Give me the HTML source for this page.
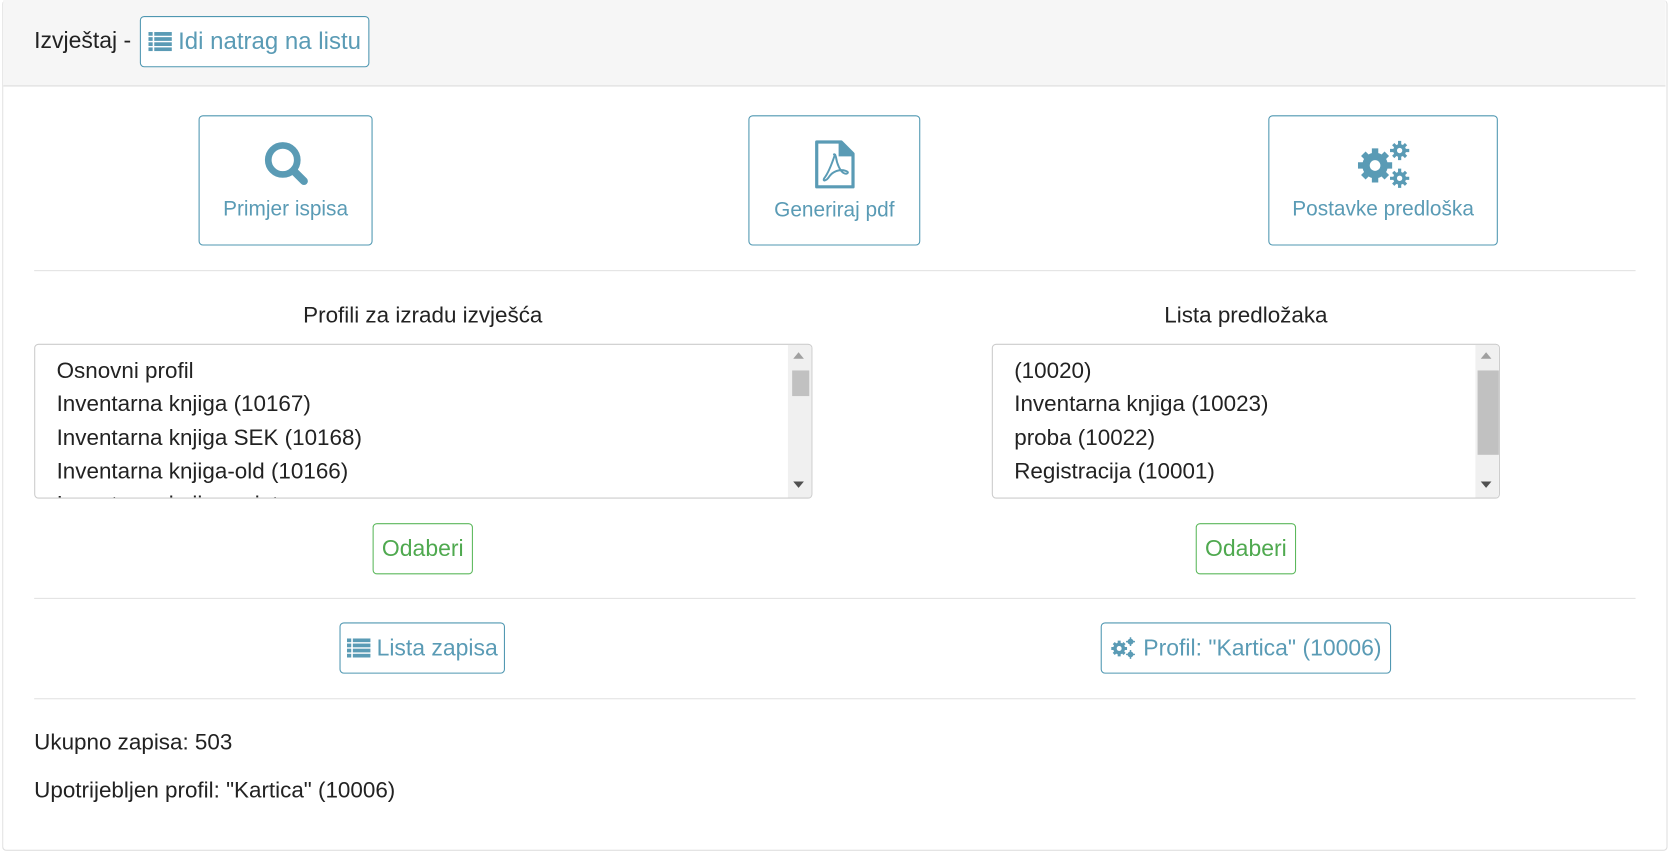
<!DOCTYPE html>
<html><head><meta charset="utf-8"><style>
html,body{margin:0;padding:0;background:#fff;overflow:hidden;width:1674px;height:862px}
#w{position:absolute;left:0;top:0;width:1563px;height:805px;transform:scale(1.0676);transform-origin:0 0;font-family:"Liberation Sans",sans-serif;color:#222}
.a{position:absolute}
.panel{left:2px;top:0;width:1558px;height:796px;border:1px solid #ddd;border-radius:4px;border-top:none}
.head{left:3px;top:0;width:1557px;height:80px;background:#f6f6f6;border-bottom:1px solid #dcdcdc}
.btn{position:absolute;box-sizing:border-box;border:1px solid #4f97b1;border-radius:4px;color:#5a9bb5;background:#fff;display:flex;align-items:center;justify-content:center;white-space:nowrap}
.big{flex-direction:column;font-size:19.5px}
.big svg{margin-bottom:8px}
.g{border-color:#5cb85c;color:#4fa94f;font-size:21.5px}
.hr{position:absolute;left:32px;width:1500px;height:0;border-top:1px solid #e2e2e2}
.sel{position:absolute;box-sizing:border-box;border:1px solid #ccc;border-radius:4px;height:145px;top:322px;overflow:hidden;font-size:21px;color:#222}
.sel div.it{position:absolute;left:20px}
.sb{position:absolute;right:0;top:0;width:22px;height:143px;background:#f0f0f0}
.t{position:absolute;font-size:21px;white-space:nowrap}
</style></head><body><div id="w">
<div class="a panel"></div>
<div class="a head"></div>
<div class="t" style="left:32px;top:26px;font-size:21.5px">Izvještaj -</div>
<div class="btn" style="left:131px;top:15px;width:215px;height:48px;font-size:22.5px">
<svg width="22" height="18" viewBox="0 0 22 18" style="margin-right:6px"><g fill="#5a9bb5"><rect x="0" y="0" width="4" height="3.5"/><rect x="5.5" y="0" width="16.5" height="3.5"/><rect x="0" y="4.8" width="4" height="3.5"/><rect x="5.5" y="4.8" width="16.5" height="3.5"/><rect x="0" y="9.6" width="4" height="3.5"/><rect x="5.5" y="9.6" width="16.5" height="3.5"/><rect x="0" y="14.4" width="4" height="3.5"/><rect x="5.5" y="14.4" width="16.5" height="3.5"/></g></svg>Idi natrag na listu</div>

<div class="btn big" style="left:186px;top:108px;width:163px;height:122px">
<svg width="46" height="46" viewBox="0 0 44 44"><circle cx="19" cy="18" r="13" fill="none" stroke="#5a9bb5" stroke-width="6"/><line x1="29" y1="28" x2="38" y2="37" stroke="#5a9bb5" stroke-width="7" stroke-linecap="round"/></svg>Primjer ispisa</div>
<div class="btn big" style="left:701px;top:108px;width:161px;height:122px">
<svg width="40" height="48" viewBox="0 0 40 48"><path d="M3 3 H26 L37 14 V45 H3 Z" fill="none" stroke="#5a9bb5" stroke-width="3" stroke-linejoin="round"/><path d="M25 3 V15 H37" fill="#5a9bb5" stroke="#5a9bb5" stroke-width="3"/><path d="M20 15 C17 24 14 32 10 37 C8 40 12 40 15 35 C18 31 24 28 30 30 C34 31 32 34 28 32 C25 30 22 24 21 17 C20 13 18 15 20 15 Z" fill="none" stroke="#5a9bb5" stroke-width="1.8"/></svg>Generiraj pdf</div>
<div class="btn big" style="left:1188px;top:108px;width:215px;height:122px">
<svg width="52" height="46" viewBox="0 0 52 46"><g fill="#5a9bb5"><circle cx="18" cy="24" r="12"/><g stroke="#5a9bb5" stroke-width="6"><line x1="18" y1="8" x2="18" y2="40"/><line x1="2" y1="24" x2="34" y2="24"/><line x1="7" y1="13" x2="29" y2="35"/><line x1="29" y1="13" x2="7" y2="35"/></g><circle cx="41" cy="10" r="6"/><g stroke="#5a9bb5" stroke-width="3"><line x1="41" y1="1" x2="41" y2="19"/><line x1="32" y1="10" x2="50" y2="10"/><line x1="35" y1="4" x2="47" y2="16"/><line x1="47" y1="4" x2="35" y2="16"/></g><circle cx="41" cy="36" r="6"/><g stroke="#5a9bb5" stroke-width="3"><line x1="41" y1="27" x2="41" y2="45"/><line x1="32" y1="36" x2="50" y2="36"/><line x1="35" y1="30" x2="47" y2="42"/><line x1="47" y1="30" x2="35" y2="42"/></g></g><circle cx="18" cy="24" r="5" fill="#fff"/><circle cx="41" cy="10" r="2.5" fill="#fff"/><circle cx="41" cy="36" r="2.5" fill="#fff"/></svg>Postavke predloška</div>

<div class="hr" style="top:253px"></div>
<div class="t" style="left:32px;width:728px;text-align:center;top:284px">Profili za izradu izvješća</div>
<div class="t" style="left:929px;width:476px;text-align:center;top:284px">Lista predložaka</div>

<div class="sel" style="left:32px;width:729px">
<div class="it" style="top:13px">Osnovni profil</div>
<div class="it" style="top:44px">Inventarna knjiga (10167)</div>
<div class="it" style="top:76px">Inventarna knjiga SEK (10168)</div>
<div class="it" style="top:107px">Inventarna knjiga-old (10166)</div>
<div class="it" style="top:138px">Inventarna knjiga-print</div>
<div class="sb"><div style="position:absolute;left:5px;top:7px;border:5px solid transparent;border-bottom:6px solid #a0a0a0;border-top:none"></div><div style="position:absolute;left:4px;top:24px;width:16px;height:24px;background:#c1c1c1"></div><div style="position:absolute;left:5px;bottom:9px;border:5px solid transparent;border-top:6px solid #505050;border-bottom:none"></div></div>
</div>
<div class="sel" style="left:929px;width:476px">
<div class="it" style="top:13px">(10020)</div>
<div class="it" style="top:44px">Inventarna knjiga (10023)</div>
<div class="it" style="top:76px">proba (10022)</div>
<div class="it" style="top:107px">Registracija (10001)</div>
<div class="sb"><div style="position:absolute;left:5px;top:7px;border:5px solid transparent;border-bottom:6px solid #a0a0a0;border-top:none"></div><div style="position:absolute;left:2px;top:24px;width:20px;height:79px;background:#c1c1c1"></div><div style="position:absolute;left:5px;bottom:9px;border:5px solid transparent;border-top:6px solid #505050;border-bottom:none"></div></div>
</div>

<div class="btn g" style="left:349px;top:490px;width:94px;height:48px">Odaberi</div>
<div class="btn g" style="left:1120px;top:490px;width:94px;height:48px">Odaberi</div>

<div class="hr" style="top:560px"></div>
<div class="btn" style="left:318px;top:583px;width:155px;height:48px;font-size:21.5px">
<svg width="22" height="18" viewBox="0 0 22 18" style="margin-right:6px"><g fill="#5a9bb5"><rect x="0" y="0" width="4" height="3.5"/><rect x="5.5" y="0" width="16.5" height="3.5"/><rect x="0" y="4.8" width="4" height="3.5"/><rect x="5.5" y="4.8" width="16.5" height="3.5"/><rect x="0" y="9.6" width="4" height="3.5"/><rect x="5.5" y="9.6" width="16.5" height="3.5"/><rect x="0" y="14.4" width="4" height="3.5"/><rect x="5.5" y="14.4" width="16.5" height="3.5"/></g></svg>Lista zapisa</div>
<div class="btn" style="left:1031px;top:583px;width:272px;height:48px;font-size:21.5px">
<svg width="24" height="22" viewBox="0 0 52 46" style="margin-right:7px"><g fill="#5a9bb5"><circle cx="18" cy="24" r="12"/><g stroke="#5a9bb5" stroke-width="6"><line x1="18" y1="8" x2="18" y2="40"/><line x1="2" y1="24" x2="34" y2="24"/><line x1="7" y1="13" x2="29" y2="35"/><line x1="29" y1="13" x2="7" y2="35"/></g><circle cx="41" cy="10" r="6"/><g stroke="#5a9bb5" stroke-width="3"><line x1="41" y1="1" x2="41" y2="19"/><line x1="32" y1="10" x2="50" y2="10"/></g><circle cx="41" cy="36" r="6"/><g stroke="#5a9bb5" stroke-width="3"><line x1="41" y1="27" x2="41" y2="45"/><line x1="32" y1="36" x2="50" y2="36"/></g></g><circle cx="18" cy="24" r="5" fill="#fff"/></svg>Profil: "Kartica" (10006)</div>

<div class="hr" style="top:654px"></div>
<div class="t" style="left:32px;top:684px">Ukupno zapisa: 503</div>
<div class="t" style="left:32px;top:729px">Upotrijebljen profil: "Kartica" (10006)</div>
</div></body></html>
